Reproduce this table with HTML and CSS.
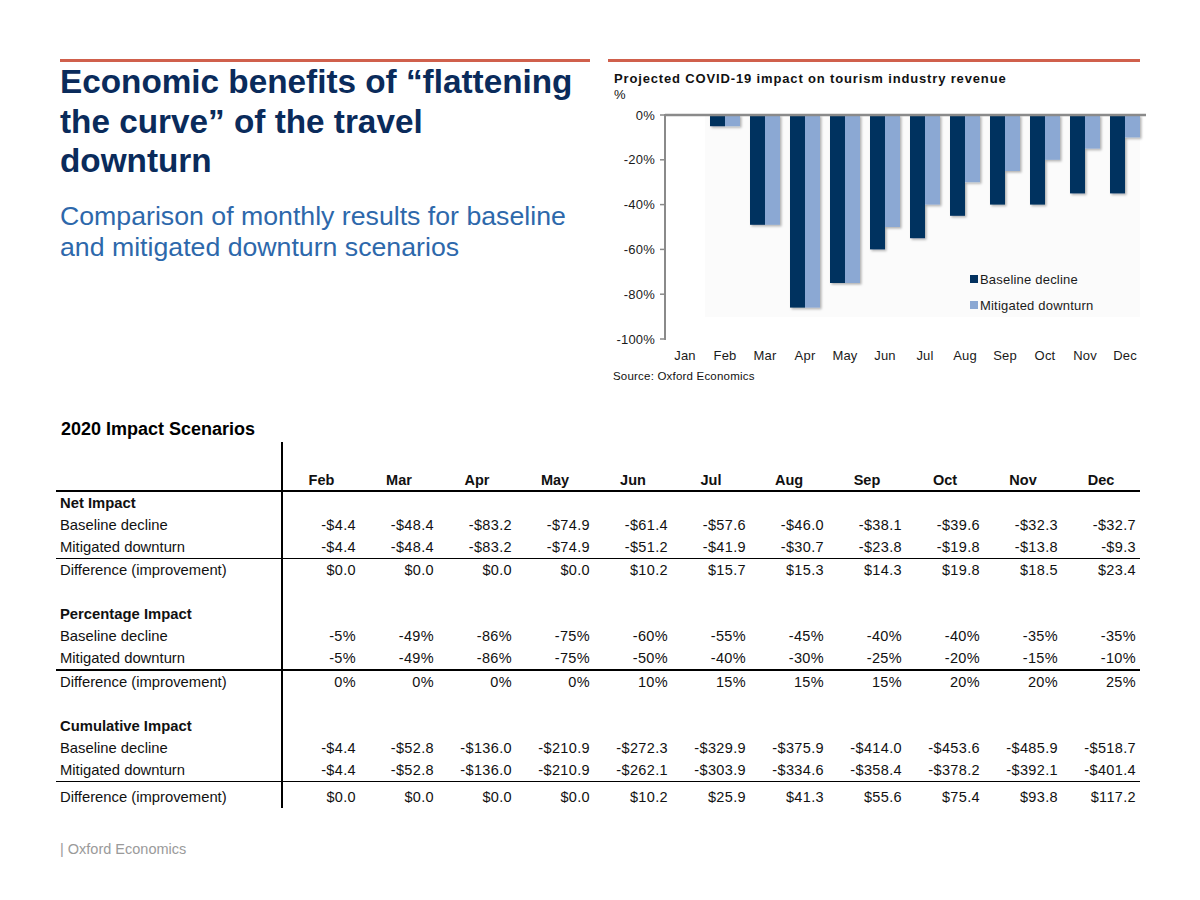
FILE: index.html
```html
<!DOCTYPE html>
<html lang="en">
<head>
<meta charset="utf-8">
<title>Economic benefits of flattening the curve</title>
<link rel="stylesheet" href="styles.css">
</head>
<body>
<div class="slide">
  <div class="top">
    <div class="left">
      <div class="rule"></div>
      <h1 class="title">Economic benefits of “flattening the curve” of the travel downturn</h1>
      <p class="subtitle">Comparison of monthly results for baseline and mitigated downturn scenarios</p>
    </div>
    <div class="right">
      <div class="rule rule-right"></div>
      <div class="chart-title">Projected COVID-19 impact on tourism industry revenue</div>
      <div class="chart-unit">%</div>
      <svg class="chart" width="540" height="262" viewBox="0 0 540 262">
        <defs>
          <filter id="sh" x="-30%" y="-10%" width="160%" height="130%">
            <feDropShadow dx="1.5" dy="1.5" stdDeviation="0.8" flood-color="#000" flood-opacity="0.3"/>
          </filter>
        </defs>
        <rect x="97" y="12" width="435" height="202" fill="#fbfbfb"/>
        <g filter="url(#sh)">
          <rect x="102" y="12" width="15" height="11.2" fill="#02315f"/>
          <rect x="117" y="12" width="15" height="11.2" fill="#8ba8d3"/>
          <rect x="142" y="12" width="15" height="109.8" fill="#02315f"/>
          <rect x="157" y="12" width="15" height="109.8" fill="#8ba8d3"/>
          <rect x="182" y="12" width="15" height="192.6" fill="#02315f"/>
          <rect x="197" y="12" width="15" height="192.6" fill="#8ba8d3"/>
          <rect x="222" y="12" width="15" height="168" fill="#02315f"/>
          <rect x="237" y="12" width="15" height="168" fill="#8ba8d3"/>
          <rect x="262" y="12" width="15" height="134.4" fill="#02315f"/>
          <rect x="277" y="12" width="15" height="112" fill="#8ba8d3"/>
          <rect x="302" y="12" width="15" height="123.2" fill="#02315f"/>
          <rect x="317" y="12" width="15" height="89.6" fill="#8ba8d3"/>
          <rect x="342" y="12" width="15" height="100.8" fill="#02315f"/>
          <rect x="357" y="12" width="15" height="67.2" fill="#8ba8d3"/>
          <rect x="382" y="12" width="15" height="89.6" fill="#02315f"/>
          <rect x="397" y="12" width="15" height="56" fill="#8ba8d3"/>
          <rect x="422" y="12" width="15" height="89.6" fill="#02315f"/>
          <rect x="437" y="12" width="15" height="44.8" fill="#8ba8d3"/>
          <rect x="462" y="12" width="15" height="78.4" fill="#02315f"/>
          <rect x="477" y="12" width="15" height="33.6" fill="#8ba8d3"/>
          <rect x="502" y="12" width="15" height="78.4" fill="#02315f"/>
          <rect x="517" y="12" width="15" height="22.4" fill="#8ba8d3"/>
        </g>
        <line x1="57" y1="12" x2="538" y2="12" stroke="#8a8a8a" stroke-width="2.5"/>
        <line x1="57" y1="11" x2="57" y2="237" stroke="#8a8a8a" stroke-width="2"/>
        <g stroke="#8a8a8a" stroke-width="1.5">
          <line x1="52" y1="12" x2="57" y2="12"/>
          <line x1="52" y1="56.8" x2="57" y2="56.8"/>
          <line x1="52" y1="101.6" x2="57" y2="101.6"/>
          <line x1="52" y1="146.4" x2="57" y2="146.4"/>
          <line x1="52" y1="191.2" x2="57" y2="191.2"/>
          <line x1="52" y1="236" x2="57" y2="236"/>
        </g>
        <g class="ax" text-anchor="end">
          <text x="47" y="16.5">0%</text>
          <text x="47" y="61.3">-20%</text>
          <text x="47" y="106.1">-40%</text>
          <text x="47" y="150.9">-60%</text>
          <text x="47" y="195.7">-80%</text>
          <text x="47" y="240.5">-100%</text>
        </g>
        <g class="ax" text-anchor="middle">
          <text x="77" y="256.5">Jan</text>
          <text x="117" y="256.5">Feb</text>
          <text x="157" y="256.5">Mar</text>
          <text x="197" y="256.5">Apr</text>
          <text x="237" y="256.5">May</text>
          <text x="277" y="256.5">Jun</text>
          <text x="317" y="256.5">Jul</text>
          <text x="357" y="256.5">Aug</text>
          <text x="397" y="256.5">Sep</text>
          <text x="437" y="256.5">Oct</text>
          <text x="477" y="256.5">Nov</text>
          <text x="517" y="256.5">Dec</text>
        </g>
        <rect x="362" y="172" width="8" height="8" fill="#02315f"/>
        <text class="ax" x="372" y="180.5">Baseline decline</text>
        <rect x="362" y="198" width="8" height="8" fill="#8ba8d3"/>
        <text class="ax" x="372" y="206.5">Mitigated downturn</text>
      </svg>
      <div class="source">Source: Oxford Economics</div>
    </div>
  </div>

  <div class="table-block">
    <div class="table-title">2020 Impact Scenarios</div>
    <table class="scen">
      <colgroup>
        <col class="c-label">
        <col span="11" class="c-val">
      </colgroup>
      <thead>
        <tr class="head">
          <th class="lab"></th>
          <th>Feb</th><th>Mar</th><th>Apr</th><th>May</th><th>Jun</th><th>Jul</th><th>Aug</th><th>Sep</th><th>Oct</th><th>Nov</th><th>Dec</th>
        </tr>
      </thead>
      <tbody>
        <tr class="sec"><td class="lab">Net Impact</td><td></td><td></td><td></td><td></td><td></td><td></td><td></td><td></td><td></td><td></td><td></td></tr>
        <tr><td class="lab">Baseline decline</td><td>-$4.4</td><td>-$48.4</td><td>-$83.2</td><td>-$74.9</td><td>-$61.4</td><td>-$57.6</td><td>-$46.0</td><td>-$38.1</td><td>-$39.6</td><td>-$32.3</td><td>-$32.7</td></tr>
        <tr class="line-thin"><td class="lab">Mitigated downturn</td><td>-$4.4</td><td>-$48.4</td><td>-$83.2</td><td>-$74.9</td><td>-$51.2</td><td>-$41.9</td><td>-$30.7</td><td>-$23.8</td><td>-$19.8</td><td>-$13.8</td><td>-$9.3</td></tr>
        <tr><td class="lab">Difference (improvement)</td><td>$0.0</td><td>$0.0</td><td>$0.0</td><td>$0.0</td><td>$10.2</td><td>$15.7</td><td>$15.3</td><td>$14.3</td><td>$19.8</td><td>$18.5</td><td>$23.4</td></tr>
        <tr class="blank"><td class="lab"></td><td colspan="11"></td></tr>
        <tr class="sec"><td class="lab">Percentage Impact</td><td></td><td></td><td></td><td></td><td></td><td></td><td></td><td></td><td></td><td></td><td></td></tr>
        <tr><td class="lab">Baseline decline</td><td>-5%</td><td>-49%</td><td>-86%</td><td>-75%</td><td>-60%</td><td>-55%</td><td>-45%</td><td>-40%</td><td>-40%</td><td>-35%</td><td>-35%</td></tr>
        <tr class="line-thick"><td class="lab">Mitigated downturn</td><td>-5%</td><td>-49%</td><td>-86%</td><td>-75%</td><td>-50%</td><td>-40%</td><td>-30%</td><td>-25%</td><td>-20%</td><td>-15%</td><td>-10%</td></tr>
        <tr><td class="lab">Difference (improvement)</td><td>0%</td><td>0%</td><td>0%</td><td>0%</td><td>10%</td><td>15%</td><td>15%</td><td>15%</td><td>20%</td><td>20%</td><td>25%</td></tr>
        <tr class="blank"><td class="lab"></td><td colspan="11"></td></tr>
        <tr class="sec"><td class="lab">Cumulative Impact</td><td></td><td></td><td></td><td></td><td></td><td></td><td></td><td></td><td></td><td></td><td></td></tr>
        <tr><td class="lab">Baseline decline</td><td>-$4.4</td><td>-$52.8</td><td>-$136.0</td><td>-$210.9</td><td>-$272.3</td><td>-$329.9</td><td>-$375.9</td><td>-$414.0</td><td>-$453.6</td><td>-$485.9</td><td>-$518.7</td></tr>
        <tr class="line-mid"><td class="lab">Mitigated downturn</td><td>-$4.4</td><td>-$52.8</td><td>-$136.0</td><td>-$210.9</td><td>-$262.1</td><td>-$303.9</td><td>-$334.6</td><td>-$358.4</td><td>-$378.2</td><td>-$392.1</td><td>-$401.4</td></tr>
        <tr class="last"><td class="lab">Difference (improvement)</td><td>$0.0</td><td>$0.0</td><td>$0.0</td><td>$0.0</td><td>$10.2</td><td>$25.9</td><td>$41.3</td><td>$55.6</td><td>$75.4</td><td>$93.8</td><td>$117.2</td></tr>
      </tbody>
    </table>
  </div>

  <div class="footer">| Oxford Economics</div>
</div>
</body>
</html>
```

FILE: styles.css
```css
* { box-sizing: border-box; }

html, body {
  margin: 0;
  padding: 0;
  background: #ffffff;
}

body {
  font-family: "Liberation Sans", Arial, sans-serif;
  color: #111;
  width: 1200px;
  height: 900px;
  overflow: hidden;
}

.slide {
  padding-top: 59px;
}

.top {
  display: flex;
  gap: 18px;
  padding-left: 60px;
}

.left {
  width: 530px;
}

.right {
  width: 540px;
}

.rule {
  height: 3px;
  background: #d0604c;
}

.rule-right {
  width: 532px;
}

.title {
  margin: 0;
  max-width: 520px;
  font-size: 33.3px;
  line-height: 39.5px;
  font-weight: 700;
  color: #0a2b5b;
}

.subtitle {
  margin: 20px 0 0 0;
  font-size: 26.7px;
  line-height: 31px;
  font-weight: 400;
  color: #2d68ab;
}

.chart-title {
  margin-top: 9px;
  padding-left: 6px;
  font-size: 13px;
  line-height: 16px;
  font-weight: 700;
  letter-spacing: 0.85px;
  color: #111;
}

.chart-unit {
  padding-left: 6px;
  font-size: 13px;
  line-height: 16px;
  color: #111;
}

.chart {
  display: block;
}

.ax {
  font-family: "Liberation Sans", Arial, sans-serif;
  font-size: 13px;
  letter-spacing: 0.2px;
  fill: #1a1a1a;
}

.source {
  margin-top: 4px;
  padding-left: 5px;
  font-size: 11.5px;
  line-height: 14px;
  letter-spacing: 0.2px;
  color: #111;
}

.table-block {
  margin-top: 36px;
  padding-left: 56px;
}

.table-title {
  padding-left: 5px;
  margin-bottom: 3px;
  font-size: 18px;
  line-height: 20px;
  font-weight: 700;
  color: #000;
}

.scen {
  width: 1084px;
  table-layout: fixed;
  border-collapse: collapse;
  font-size: 14.5px;
  color: #111;
}

.c-label { width: 226px; }
.c-val { width: 78px; }

.scen th,
.scen td {
  padding: 1px 4px 0 0;
  height: 22px;
  line-height: 21px;
  text-align: right;
  white-space: nowrap;
  letter-spacing: 0.35px;
  font-weight: 400;
}

.scen .lab {
  text-align: left;
  padding: 1px 0 0 4px;
  border-right: 2px solid #000;
  letter-spacing: 0;
  font-size: 14.8px;
}

.scen thead th {
  height: 49px;
  vertical-align: bottom;
  padding: 0 0 1px 0;
  line-height: 18px;
  text-align: center;
  font-weight: 700;
  letter-spacing: 0;
  border-bottom: 2px solid #000;
}

.scen thead th.lab {
  padding: 0;
}

.scen .sec .lab {
  font-weight: 700;
}

.scen .line-thin td { border-bottom: 1px solid #000; }
.scen .line-thick td { border-bottom: 2px solid #000; }
.scen .line-mid td { border-bottom: 1.5px solid #000; }

.scen .last td {
  height: 26px;
  padding-top: 5px;
}

.footer {
  margin-top: 32px;
  padding-left: 60px;
  font-size: 14.5px;
  line-height: 18px;
  color: #9a9a9a;
}
```
